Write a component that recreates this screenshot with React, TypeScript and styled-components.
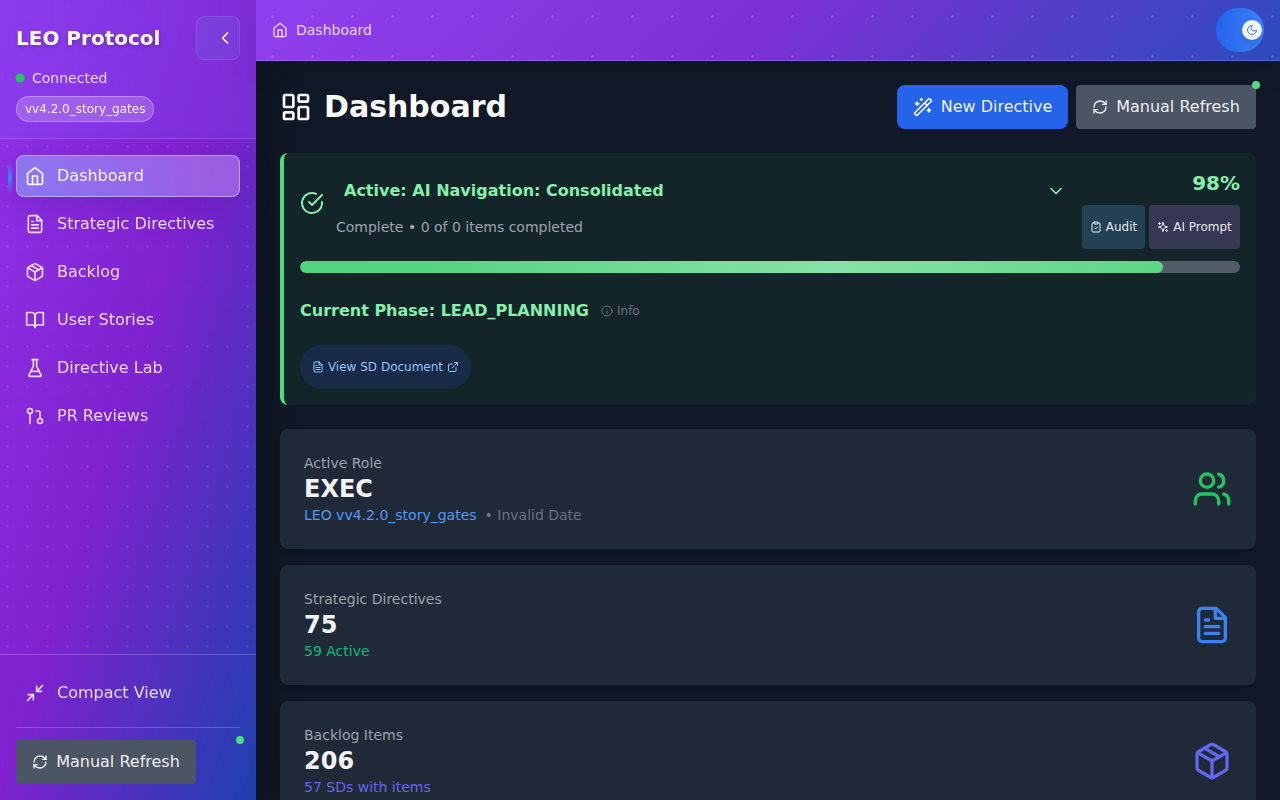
import React from 'react';
import styled, { createGlobalStyle, css } from 'styled-components';
import {
  Package, GitPullRequest, Minimize2, RefreshCw, ChevronLeft, ChevronDown, WandSparkles,
  ClipboardCheck, Info, ExternalLink, Users, LayoutDashboard,
} from 'lucide-react';

const Global = createGlobalStyle`
  *, *::before, *::after { box-sizing: border-box; }
  body { margin: 0; background: #111827; color: #fff; overflow: hidden;
    font-family: "DejaVu Sans", sans-serif; font-size: 16px; line-height: 24px; }
  h1, h2, h3, p { margin: 0; font-size: inherit; font-weight: inherit; }
  button { font: inherit; color: inherit; border: 0; padding: 0; background: none; cursor: pointer; }
  svg { display: block; flex-shrink: 0; }
`;

const strokeIcon = (...paths: string[]) => ({ size = 24 }: { size?: number }) => (
  <svg width={size} height={size} viewBox="0 0 24 24" fill="none" stroke="currentColor"
    strokeWidth={2} strokeLinecap="round" strokeLinejoin="round">
    {paths.map((d) => <path key={d} d={d} />)}
  </svg>
);

const Home = strokeIcon(
  'm3 9 9-7 9 7v11a2 2 0 0 1-2 2H5a2 2 0 0 1-2-2z',
  'M9 22V12h6v10',
);
const FileText = strokeIcon(
  'M14.5 2H6a2 2 0 0 0-2 2v16a2 2 0 0 0 2 2h12a2 2 0 0 0 2-2V7.5L14.5 2z',
  'M14 2v6h6', 'M16 13H8', 'M16 17H8', 'M10 9H8',
);
const Book = strokeIcon(
  'M2 3h6a4 4 0 0 1 4 4v14a3 3 0 0 0-3-3H2z',
  'M22 3h-6a4 4 0 0 0-4 4v14a3 3 0 0 1 3-3h7z',
);
const Flask = strokeIcon(
  'M10 2v7.527a2 2 0 0 1-.211.896L4.72 20.55a1 1 0 0 0 .9 1.45h12.76a1 1 0 0 0 .9-1.45l-5.069-10.127A2 2 0 0 1 14 9.527V2',
  'M8.5 2h7', 'M7 16h10',
);
const Moon = strokeIcon('M12 3a6 6 0 0 0 9 9 9 9 0 1 1-9-9Z');
const CheckCircle = strokeIcon('M22 11.08V12a10 10 0 1 1-5.93-9.14', 'm9 11 3 3L22 4');
const Sparkles = strokeIcon(
  'm12 3-1.912 5.813a2 2 0 0 1-1.275 1.275L3 12l5.813 1.912a2 2 0 0 1 1.275 1.275L12 21l1.912-5.813a2 2 0 0 1 1.275-1.275L21 12l-5.813-1.912a2 2 0 0 1-1.275-1.275L12 3Z',
  'M5 3v4', 'M19 17v4', 'M3 5h4', 'M17 19h4',
);

const Shell = styled.div`
  display: flex;
  height: 800px;
  overflow: hidden;
`;

const Sidebar = styled.aside`
  width: 256px;
  flex-shrink: 0;
  display: flex;
  flex-direction: column;
  background:
    radial-gradient(circle at 7.5px 6.5px, rgba(255, 255, 255, 0.1) 0.8px, transparent 1.6px) 0 0 / 20px 20px,
    linear-gradient(to bottom right, #9333ea, #7e22ce 50%, #1e40af);
  box-shadow: 0 25px 50px -12px rgba(0, 0, 0, 0.25);
`;

const SideHeader = styled.div`
  height: 139px;
  padding: 16px 16px 0;
  border-bottom: 1px solid rgba(255, 255, 255, 0.16);
  background: linear-gradient(to right, rgba(129, 80, 246, 0.34), rgba(129, 80, 246, 0.24));
  backdrop-filter: blur(8px);
`;

const BrandRow = styled.div`
  display: flex;
  align-items: center;
  justify-content: space-between;
`;

const Brand = styled.h1`
  font-size: 20px;
  line-height: 28px;
  font-weight: 700;
  text-shadow: 0 2px 4px rgba(0, 0, 0, 0.2);
`;

const CollapseButton = styled.button`
  width: 44px;
  height: 44px;
  border: 1px solid rgba(255, 255, 255, 0.1);
  border-radius: 8px;
  background: rgba(110, 100, 220, 0.3);
  display: flex;
  align-items: center;
  justify-content: flex-end;
  padding-right: 4px;
`;

const Status = styled.div`
  display: flex;
  align-items: center;
  gap: 8px;
  margin-top: 8px;
  font-size: 14px;
  line-height: 20px;
  color: rgba(255, 255, 255, 0.8);
`;

const Dot = styled.span`
  width: 8px;
  height: 8px;
  border-radius: 50%;
  background: #22c55e;
  transform: scale(1.15);
`;

const Version = styled.span`
  display: inline-flex;
  margin-top: 8px;
  height: 26px;
  align-items: center;
  padding: 0 8px;
  border: 1px solid rgba(255, 255, 255, 0.3);
  border-radius: 13px;
  background: rgba(255, 255, 255, 0.2);
  font-size: 12px;
  line-height: 16px;
  color: rgba(255, 255, 255, 0.9);
`;

const Nav = styled.nav`
  flex: 1;
  display: flex;
  flex-direction: column;
  gap: 6px;
  padding: 16px;
`;

const NavItem = styled.a<{ $active?: boolean }>`
  position: relative;
  display: flex;
  align-items: center;
  gap: 12px;
  height: 42px;
  padding: 0 8px;
  border: 1px solid transparent;
  border-radius: 8px;
  color: rgba(255, 255, 255, 0.82);
  backdrop-filter: blur(8px);
  ${(p) => p.$active && css`
    color: rgba(255, 255, 255, 0.93);
    border-color: rgba(255, 255, 255, 0.38);
    background: linear-gradient(to right, rgba(140, 146, 246, 0.72), rgba(180, 130, 240, 0.6));
    box-shadow: 0 8px 32px rgba(60, 20, 140, 0.25);
    &::before {
      content: '';
      position: absolute;
      left: -9px;
      top: 6px;
      width: 4px;
      height: 32px;
      background: linear-gradient(to bottom, transparent, #3b82f6, transparent);
    }
  `}
`;

const NavIcon = styled.span`
  width: 20px;
  display: flex;
  justify-content: center;
`;

const SideFooter = styled.div`
  height: 146px;
  padding: 17px 16px 16px;
  border-top: 1px solid rgba(255, 255, 255, 0.2);
  backdrop-filter: blur(8px);
`;

const RefreshArea = styled.div`
  margin-top: 13px;
  padding-top: 12px;
  border-top: 1px solid rgba(255, 255, 255, 0.2);
`;

const RefreshWrap = styled.div`
  position: relative;
`;

const RefreshButton = styled.button`
  width: 180px;
  height: 44px;
  display: flex;
  align-items: center;
  justify-content: center;
  gap: 8px;
  border-radius: 4px;
  background: #4b5563;
  color: rgba(255, 255, 255, 0.93);
`;

const LiveDot = styled.span`
  position: absolute;
  top: -4px;
  right: -4px;
  width: 8px;
  height: 8px;
  border-radius: 50%;
  background: #4ade80;
`;

const Main = styled.main`
  flex: 1;
  min-width: 0;
  display: flex;
  flex-direction: column;
`;

const TopBar = styled.header`
  height: 61px;
  flex-shrink: 0;
  display: flex;
  align-items: center;
  justify-content: space-between;
  padding: 0 16px;
  border-bottom: 1px solid rgba(255, 255, 255, 0.16);
  background:
    radial-gradient(circle at 16.5px 16.5px, rgba(255, 255, 255, 0.2) 0.8px, transparent 1.6px) 0 0 / 40px 40px border-box,
    linear-gradient(135deg, #9040ee, #7c30d5 50%, #2c4bbd) border-box;
  box-shadow: 0 8px 32px rgba(0, 0, 0, 0.1);
`;

const Crumb = styled.div`
  display: flex;
  align-items: center;
  gap: 8px;
  font-size: 14px;
  line-height: 20px;
  color: rgba(255, 255, 255, 0.8);
`;

const ThemeToggle = styled.button`
  width: 48px;
  height: 44px;
  display: flex;
  align-items: center;
  justify-content: flex-end;
  padding-right: 2px;
  border-radius: 22px;
  background: linear-gradient(to right, #2563eb, #3b82f6);
`;

const Knob = styled.span`
  width: 20px;
  height: 20px;
  display: flex;
  align-items: center;
  justify-content: center;
  border-radius: 50%;
  background: #f3f4f6;
  color: #3b82f6;
  box-shadow: 0 4px 6px rgba(0, 0, 0, 0.1);
`;

const Content = styled.div`
  flex: 1;
  min-height: 0;
  padding: 24px 24px 0;
  overflow: hidden;
  background: linear-gradient(to right, rgba(0, 0, 0, 0.1), transparent 48px);
`;

const PageHead = styled.div`
  display: flex;
  align-items: center;
  justify-content: space-between;
  height: 44px;
  margin-bottom: 24px;
`;

const PageTitle = styled.h2`
  display: flex;
  align-items: center;
  gap: 12px;
  font-size: 30px;
  line-height: 36px;
  font-weight: 700;
`;

const Actions = styled.div`
  display: flex;
  gap: 8px;
`;

const PrimaryButton = styled.button`
  width: 171px;
  height: 44px;
  display: flex;
  align-items: center;
  justify-content: center;
  gap: 8px;
  border-radius: 8px;
  background: #2563eb;
  color: rgba(255, 255, 255, 0.95);
`;

const Directive = styled.section`
  height: 252px;
  margin-bottom: 24px;
  padding: 16px;
  border-left: 4px solid #4ade80;
  border-radius: 8px;
  background: #132529;
  color: #86efac;
`;

const DirectiveHead = styled.div`
  display: flex;
  justify-content: space-between;
  height: 80px;
`;

const DirectiveInfo = styled.div`
  flex: 1;
  display: flex;
  align-items: center;
  gap: 12px;
  height: 68px;
`;

const DirectiveText = styled.div`
  flex: 1;
`;

const DirectiveTitle = styled.div`
  height: 44px;
  display: flex;
  align-items: center;
  justify-content: space-between;
  padding: 0 16px 0 8px;
  font-weight: 700;
`;

const Muted = styled.p`
  margin-top: 4px;
  font-size: 14px;
  line-height: 20px;
  color: #9ca3af;
`;

const DirectiveSide = styled.div`
  display: flex;
  flex-direction: column;
  align-items: flex-end;
`;

const Percent = styled.div`
  height: 36px;
  font-size: 20px;
  line-height: 28px;
  font-weight: 700;
`;

const SmallActions = styled.div`
  display: flex;
  gap: 4px;
`;

const SmallButton = styled.button<{ $tone: string; $width: number }>`
  width: ${(p) => p.$width}px;
  height: 44px;
  display: flex;
  align-items: center;
  justify-content: center;
  gap: 4px;
  border-radius: 4px;
  background: ${(p) => p.$tone};
  font-size: 12px;
  line-height: 16px;
  color: rgba(255, 255, 255, 0.9);
`;

const Track = styled.div`
  height: 12px;
  margin-top: 12px;
  border-radius: 6px;
  background: #525c69;
  overflow: hidden;
`;

const Fill = styled.div`
  width: 863px;
  height: 12px;
  border-radius: 6px;
  background: linear-gradient(to right, #50d480, #53d482 14%, #86e2a8 62%, #5bd686);
`;

const Phase = styled.div`
  display: flex;
  align-items: center;
  gap: 12px;
  height: 44px;
  margin-top: 16px;
  font-weight: 700;
`;

const InfoTag = styled.span`
  display: flex;
  align-items: center;
  gap: 4px;
  font-size: 12px;
  line-height: 16px;
  font-weight: 400;
  color: #6b7280;
`;

const DocLink = styled.a`
  width: 171px;
  height: 44px;
  margin-top: 12px;
  display: flex;
  align-items: center;
  justify-content: center;
  gap: 4px;
  border-radius: 22px;
  background: #172a46;
  font-size: 12px;
  line-height: 16px;
  color: #93c5fd;
`;

const StatCard = styled.section`
  display: flex;
  align-items: center;
  justify-content: space-between;
  height: 120px;
  margin-bottom: 16px;
  padding: 0 24px;
  border-radius: 8px;
  background: #202937;
  box-shadow: 0 4px 6px rgba(0, 0, 0, 0.14);
`;

const StatLabel = styled.p`
  font-size: 14px;
  line-height: 20px;
  color: #9ca3af;
`;

const StatValue = styled.p`
  font-size: 24px;
  line-height: 32px;
  font-weight: 700;
  color: #f3f4f6;
`;

const StatNote = styled.p<{ $color: string }>`
  display: flex;
  gap: 8px;
  font-size: 14px;
  line-height: 20px;
  color: ${(p) => p.$color};
`;

const Faint = styled.span`
  color: #6b7280;
`;

const StatIcon = styled.span<{ $color: string }>`
  color: ${(p) => p.$color};
`;

const navItems = [
  { label: 'Dashboard', Icon: Home, active: true },
  { label: 'Strategic Directives', Icon: FileText },
  { label: 'Backlog', Icon: Package },
  { label: 'User Stories', Icon: Book },
  { label: 'Directive Lab', Icon: Flask },
  { label: 'PR Reviews', Icon: GitPullRequest },
];

const stats = [
  { label: 'Active Role', value: 'EXEC', note: 'LEO vv4.2.0_story_gates', extra: '• Invalid Date', noteColor: '#4d9bf8', Icon: Users, color: '#22c55e' },
  { label: 'Strategic Directives', value: '75', note: '59 Active', noteColor: '#10b981', Icon: FileText, color: '#3b82f6' },
  { label: 'Backlog Items', value: '206', note: '57 SDs with items', noteColor: '#6366f1', Icon: Package, color: '#6366f1' },
];

const ManualRefresh = () => (
  <RefreshWrap>
    <RefreshButton><RefreshCw size={16} />Manual Refresh</RefreshButton>
    <LiveDot />
  </RefreshWrap>
);

export default function App() {
  return (
    <Shell>
      <Global />
      <Sidebar>
        <SideHeader>
          <BrandRow>
            <Brand>LEO Protocol</Brand>
            <CollapseButton><ChevronLeft size={20} /></CollapseButton>
          </BrandRow>
          <Status><Dot />Connected</Status>
          <Version>vv4.2.0_story_gates</Version>
        </SideHeader>
        <Nav>
          {navItems.map(({ label, Icon, active }) => (
            <NavItem key={label} $active={active}>
              <NavIcon><Icon size={20} /></NavIcon>
              {label}
            </NavItem>
          ))}
        </Nav>
        <SideFooter>
          <NavItem><NavIcon><Minimize2 size={20} /></NavIcon>Compact View</NavItem>
          <RefreshArea><ManualRefresh /></RefreshArea>
        </SideFooter>
      </Sidebar>
      <Main>
        <TopBar>
          <Crumb><Home size={16} />Dashboard</Crumb>
          <ThemeToggle><Knob><Moon size={12} /></Knob></ThemeToggle>
        </TopBar>
        <Content>
          <PageHead>
            <PageTitle><LayoutDashboard size={32} />Dashboard</PageTitle>
            <Actions>
              <PrimaryButton><WandSparkles size={20} />New Directive</PrimaryButton>
              <ManualRefresh />
            </Actions>
          </PageHead>
          <Directive>
            <DirectiveHead>
              <DirectiveInfo>
                <CheckCircle size={24} />
                <DirectiveText>
                  <DirectiveTitle>Active: AI Navigation: Consolidated<ChevronDown size={20} /></DirectiveTitle>
                  <Muted>Complete • 0 of 0 items completed</Muted>
                </DirectiveText>
              </DirectiveInfo>
              <DirectiveSide>
                <Percent>98%</Percent>
                <SmallActions>
                  <SmallButton $tone="#234054" $width={63}><ClipboardCheck size={12} />Audit</SmallButton>
                  <SmallButton $tone="#373854" $width={91}><Sparkles size={12} />AI Prompt</SmallButton>
                </SmallActions>
              </DirectiveSide>
            </DirectiveHead>
            <Track><Fill /></Track>
            <Phase>Current Phase: LEAD_PLANNING<InfoTag><Info size={12} />Info</InfoTag></Phase>
            <DocLink><FileText size={12} />View SD Document<ExternalLink size={12} /></DocLink>
          </Directive>
          {stats.map(({ label, value, note, extra, noteColor, Icon, color }) => (
            <StatCard key={label}>
              <div>
                <StatLabel>{label}</StatLabel>
                <StatValue>{value}</StatValue>
                <StatNote $color={noteColor}>{note}{extra && <Faint>{extra}</Faint>}</StatNote>
              </div>
              <StatIcon $color={color}><Icon size={40} /></StatIcon>
            </StatCard>
          ))}
        </Content>
      </Main>
    </Shell>
  );
}
